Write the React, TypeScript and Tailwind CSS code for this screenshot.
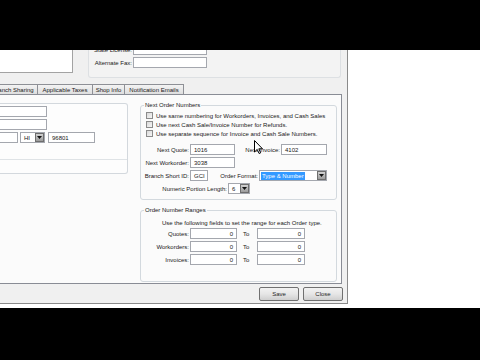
import type { ReactNode } from 'react';

const box = 'h-[11px] bg-white border border-[#a4a7ae] flex items-center';

function TextBox({ className = '', value = '', right = false }: { className?: string; value?: string; right?: boolean }) {
  return (
    <div className={`${box} ${right ? 'justify-end pr-[3px]' : 'pl-[3px]'} ${className}`}>
      <span>{value}</span>
    </div>
  );
}

function DropButton() {
  return (
    <div className="w-[9px] h-[9px] border border-[#6e6e6e] bg-gradient-to-b from-[#d2d2d2] to-[#9c9c9c] flex items-center justify-center shrink-0">
      <svg width="5" height="3" viewBox="0 0 5 3">
        <path d="M0 0h5L2.5 3z" fill="#111" />
      </svg>
    </div>
  );
}

function Combo({ className = '', value, selected = false }: { className?: string; value: string; selected?: boolean }) {
  return (
    <div className={`${box} pl-[1px] ${className}`}>
      <div className="flex-1 flex items-center min-w-0">
        {selected ? (
          <span className="bg-[#3399ff] text-white h-[8px] flex items-center px-[1px]">{value}</span>
        ) : (
          <span className="pl-[2px]">{value}</span>
        )}
      </div>
      <DropButton />
    </div>
  );
}

function CheckRow({ children }: { children: ReactNode }) {
  return (
    <div className="h-[9px] flex items-center pl-[5px]">
      <div className="w-[7px] h-[7px] border border-[#8b8b8b] bg-gradient-to-br from-[#d9d9d9] to-[#f6f6f6] shrink-0" />
      <span className="ml-[3px] whitespace-nowrap">{children}</span>
    </div>
  );
}

function Label({ className = '', children }: { className?: string; children: ReactNode }) {
  return <span className={`text-right whitespace-nowrap shrink-0 ${className}`}>{children}</span>;
}

function Tab({ className = '', children }: { className?: string; children: ReactNode }) {
  return (
    <div
      className={`h-[10px] border-t border-l border-r border-[#8e9096] bg-gradient-to-b from-[#f3f3f3] to-[#dedede] flex items-center justify-center whitespace-nowrap shrink-0 ${className}`}
    >
      {children}
    </div>
  );
}

function WinButton({ children }: { children: ReactNode }) {
  return (
    <button className="w-[40px] h-[14px] rounded-[2px] border border-[#707070] bg-gradient-to-b from-[#f2f2f2] via-[#e6e6e6] to-[#cfcfcf] flex items-center justify-center text-[#1e1e1e]">
      {children}
    </button>
  );
}

export default function App() {
  return (
    <div className="w-[480px] h-[360px] bg-black overflow-hidden relative font-['Liberation_Sans',Arial,sans-serif] text-[6px] leading-none text-[#202020]">
      <div className="h-[50px]" />
      <div className="h-[258px] bg-white">
        {/* Dialog */}
        <div className="w-[348px] h-[254px] bg-[#f0f0f0] border-r border-b border-[#8a8a8a] overflow-hidden flex flex-col">
          {/* Top form, scrolled off the top */}
          <div className="h-[34px] flex items-start shrink-0">
            <div className="w-[73px] h-[23px] bg-white border-r border-b border-[#a3a3a3] shrink-0" />
            <div className="ml-[15px] w-[253px] h-[28px] border-l border-r border-b border-[#dde0e3] rounded-b-[3px] bg-[#f3f3f3] overflow-hidden">
              <div className="-mt-[6px] flex flex-col gap-[2px]">
                <div className="flex items-center">
                  <Label className="w-[43px]">State License:</Label>
                  <TextBox className="ml-[1px] w-[74px]" />
                </div>
                <div className="flex items-center">
                  <Label className="w-[43px]">Alternate Fax:</Label>
                  <TextBox className="ml-[1px] w-[74px]" />
                </div>
              </div>
            </div>
          </div>

          {/* Tabs */}
          <div className="h-[10px] flex shrink-0">
            <Tab className="-ml-[12px] w-[50px]">Branch Sharing</Tab>
            <Tab className="w-[55px] border-l-0">Applicable Taxes</Tab>
            <Tab className="w-[32px] border-l-0">Shop Info</Tab>
            <Tab className="w-[59px] border-l-0">Notification Emails</Tab>
          </div>

          {/* Tab page */}
          <div className="w-[342px] h-[190px] border-t border-r border-b border-[#898c95] bg-[#fbfbfb] flex items-start shrink-0">
            {/* Address box on the left */}
            <div className="w-[128px] mt-[8px] h-[71px] border-t border-r border-b border-[#d3d8dd] rounded-r-[3px] bg-[#fdfdfd] shrink-0">
              <div className="pt-[2px] flex flex-col gap-[2px]">
                <TextBox className="w-[47px] border-l-0" />
                <TextBox className="w-[47px] border-l-0" />
                <div className="flex items-center">
                  <TextBox className="w-[18px] border-l-0" />
                  <Combo className="ml-[2px] w-[25px]" value="HI" />
                  <TextBox className="ml-[3px] w-[47px]" value="96801" />
                </div>
              </div>
              <div className="mt-[16px] border-t border-[#dfe3e6]" />
            </div>

            {/* Right column */}
            <div className="ml-[12px] w-[197px] flex flex-col shrink-0">
              <fieldset className="mt-[7px] border border-[#d3d9de] rounded-[3px] pb-[5px]">
                <legend className="ml-[3px] px-[1px] leading-none h-[6px]">Next Order Numbers</legend>
                <div className="mt-[3px]">
                  <CheckRow>Use same numbering for Workorders, Invoices, and Cash Sales</CheckRow>
                  <CheckRow>Use next Cash Sale/Invoice Number for Refunds.</CheckRow>
                  <CheckRow>Use separate sequence for Invoice and Cash Sale Numbers.</CheckRow>
                </div>
                <div className="mt-[6px] flex flex-col gap-[2px]">
                  <div className="flex items-center">
                    <Label className="w-[48px]">Next Quote:</Label>
                    <TextBox className="ml-[1px] w-[45px]" value="1016" />
                    <Label className="w-[46px] pr-[1px]">Next Invoice:</Label>
                    <TextBox className="w-[46px]" value="4102" />
                  </div>
                  <div className="flex items-center">
                    <Label className="w-[48px]">Next Workorder:</Label>
                    <TextBox className="ml-[1px] w-[45px]" value="3038" />
                  </div>
                  <div className="flex items-center">
                    <Label className="w-[48px]">Branch Short ID:</Label>
                    <TextBox className="ml-[1px] w-[18px]" value="GCI" />
                    <Label className="w-[51px] pr-[1px]">Order Format:</Label>
                    <Combo className="w-[68px]" value="Type &amp; Number" selected />
                  </div>
                  <div className="flex items-center">
                    <Label className="w-[86px]">Numeric Portion Length:</Label>
                    <Combo className="ml-[1px] w-[22px]" value="6" />
                  </div>
                </div>
              </fieldset>

              <fieldset className="mt-[7px] border border-[#d3d9de] rounded-[3px] pb-[16px]">
                <legend className="ml-[3px] px-[1px] leading-none h-[6px]">Order Number Ranges</legend>
                <p className="mt-[7px] pl-[21px] whitespace-nowrap">
                  Use the following fields to set the range for each Order type.
                </p>
                <div className="mt-[2px] flex flex-col gap-[2px]">
                  {['Quotes:', 'Workorders:', 'Invoices:'].map((label) => (
                    <div key={label} className="flex items-center">
                      <Label className="w-[48px]">{label}</Label>
                      <TextBox className="ml-[1px] w-[47px]" value="0" right />
                      <span className="w-[20px] pl-[6px]">To</span>
                      <TextBox className="w-[48px]" value="0" right />
                    </div>
                  ))}
                </div>
              </fieldset>
            </div>
          </div>

          {/* Buttons */}
          <div className="flex justify-end gap-[4px] pt-[3px] pr-[4px]">
            <WinButton>Save</WinButton>
            <WinButton>Close</WinButton>
          </div>
        </div>
      </div>

      {/* Mouse pointer */}
      <svg className="absolute left-[254px] top-[140px]" width="9" height="14" viewBox="0 0 9 14">
        <path d="M0.5 0.5v11.5l2.7-2.6 1.9 4.1 1.6-0.7-1.9-4h3.7z" fill="#fff" stroke="#000" strokeWidth="1" strokeLinejoin="round" />
      </svg>
    </div>
  );
}
